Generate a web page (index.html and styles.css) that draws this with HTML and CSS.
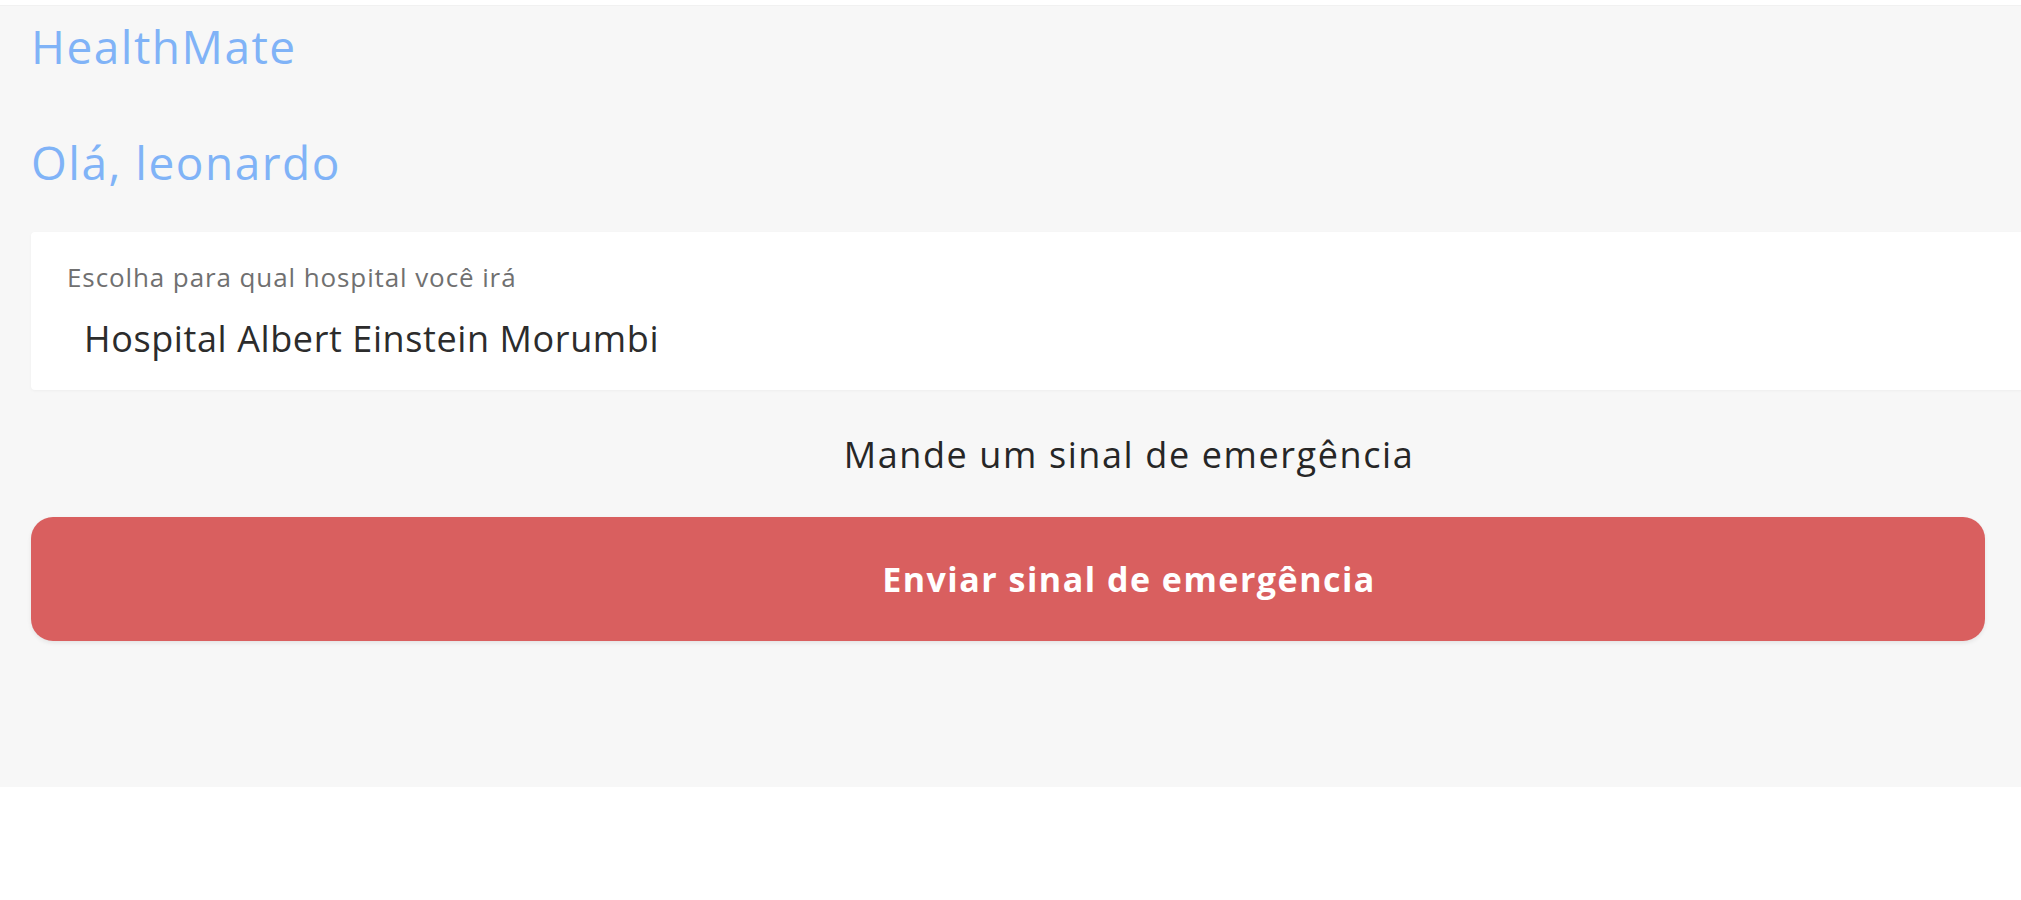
FILE: index.html
```html
<!DOCTYPE html>
<html lang="pt-BR">
<head>
<meta charset="utf-8">
<title>HealthMate</title>
<link rel="stylesheet" href="styles.css">
</head>
<body>
<div class="app">
  <div class="content">
    <h1 class="brand">HealthMate</h1>
    <h2 class="greeting">Olá, leonardo</h2>
    <div class="card">
      <label class="field-label">Escolha para qual hospital você irá</label>
      <div class="select">Hospital Albert Einstein Morumbi</div>
    </div>
    <p class="hint">Mande um sinal de emergência</p>
    <button class="emergency">Enviar sinal de emergência</button>
  </div>
</div>
</body>
</html>
```

FILE: styles.css
```css
html, body {
  margin: 0;
  padding: 0;
  background: #ffffff;
  overflow: hidden;
}

body {
  font-family: "Open Sans", "Noto Sans", sans-serif;
  padding-top: 5px;
}

.app {
  border-top: 1px solid #f1f1f1;
  padding-top: 2px;
  background: #f7f7f7;
  height: 782px;
  box-sizing: border-box;
  padding-left: 31px;
}

.content {
  width: 2196px;
  padding-top: 8px;
}

.brand {
  margin: 0;
  font-size: 46px;
  line-height: 60px;
  font-weight: 400;
  color: #80b3f7;
  letter-spacing: 1.5px;
}

.greeting {
  margin: 56px 0 0;
  font-size: 46px;
  line-height: 60px;
  font-weight: 400;
  color: #80b3f7;
  letter-spacing: 1.5px;
}

.card {
  margin-top: 40px;
  background: #ffffff;
  height: 158px;
  box-sizing: border-box;
  padding: 27px 0 0 36px;
  border-radius: 4px;
  box-shadow: 0 1px 3px rgba(0, 0, 0, 0.04);
}

.field-label {
  display: block;
  font-size: 26px;
  line-height: 36px;
  color: #707070;
  letter-spacing: 0.9px;
}

.select {
  margin-top: 20px;
  padding-left: 17px;
  font-size: 36px;
  line-height: 48px;
  color: #2c2c2c;
  letter-spacing: 0.6px;
}

.hint {
  margin: 41px 0 0;
  text-align: center;
  font-size: 36px;
  line-height: 48px;
  color: #262626;
  letter-spacing: 1.6px;
}

.emergency {
  display: block;
  margin-top: 38px;
  width: 1954px;
  height: 124px;
  box-sizing: border-box;
  padding: 0 0 0 242px;
  border: none;
  border-radius: 22px;
  background: #d95f5f;
  box-shadow: 0 2px 4px rgba(0, 0, 0, 0.08);
  color: #ffffff;
  font-family: "Open Sans", "Noto Sans", sans-serif;
  font-size: 34px;
  font-weight: 700;
  letter-spacing: 1.5px;
  text-align: center;
}
```
